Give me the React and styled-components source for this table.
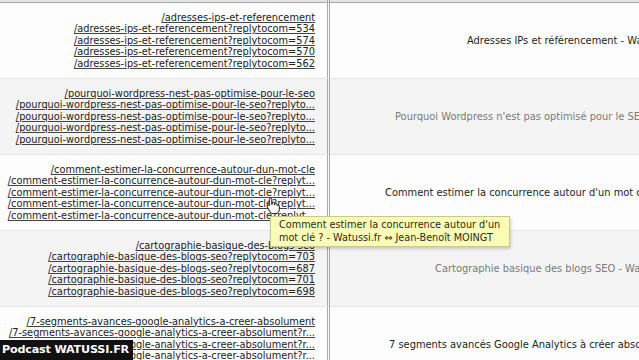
import styled, { createGlobalStyle } from "styled-components";

const GlobalStyle = createGlobalStyle`
  html, body {
    margin: 0;
    padding: 0;
    width: 639px;
    height: 360px;
    overflow: hidden;
    background: #fdfdfd;
  }
`;

const Page = styled.div`
  position: relative;
  width: 639px;
  height: 360px;
  overflow: hidden;
  font-family: "DejaVu Sans", Verdana, sans-serif;
`;

const Grid = styled.div`
  display: grid;
  grid-template-columns: 330px 1fr;
`;

const HeadCell = styled.div`
  height: 2px;
  background: #e4e4e4;
  border-bottom: 1px solid #a8a8a8;
  border-right: ${({ $divider }) => ($divider ? "3px double #a9a9a9" : "none")};
  box-sizing: content-box;
`;

const LinkCell = styled.div`
  height: 76px;
  box-sizing: border-box;
  border-right: 3px double #a9a9a9;
  border-bottom: 1px solid #e6e6e6;
  background: ${({ $shaded }) => ($shaded ? "#f4f4f4" : "#fdfdfd")};
  padding-right: 12px;
  display: flex;
  flex-direction: column;
  justify-content: center;
  align-items: flex-end;
  overflow: hidden;
`;

const Link = styled.a`
  flex-shrink: 0;
  display: block;
  white-space: nowrap;
  font-size: 9.8px;
  line-height: 11.5px;
  color: #222;
  text-decoration: underline;
  text-decoration-color: #444;
`;

const TitleCell = styled.div`
  height: 76px;
  box-sizing: border-box;
  border-bottom: 1px solid #e6e6e6;
  background: ${({ $shaded }) => ($shaded ? "#f4f4f4" : "#fdfdfd")};
  display: flex;
  align-items: center;
  padding-left: ${({ $offset }) => $offset}px;
  overflow: hidden;
`;

const Title = styled.span`
  white-space: nowrap;
  font-size: 9.9px;
  color: ${({ $muted }) => ($muted ? "#7a7a7a" : "#1e1e1e")};
`;

const Tooltip = styled.div`
  position: absolute;
  left: 270px;
  top: 216px;
  width: 240px;
  box-sizing: border-box;
  padding: 2px 7px 2px 8px;
  background: #fbfcb6;
  border: 1px solid #c9c98c;
  box-shadow: 1px 2px 3px rgba(0, 0, 0, 0.18);
  font-size: 9.7px;
  line-height: 12.5px;
  color: #2b2b1e;
  white-space: nowrap;
`;

const Cursor = styled.svg`
  position: absolute;
  left: 266px;
  top: 197px;
`;

const Badge = styled.div`
  position: absolute;
  left: 0;
  bottom: 0;
  height: 20px;
  padding: 0 4px 0 2px;
  background: #111;
  color: #fff;
  font-family: "DejaVu Sans", Verdana, sans-serif;
  font-weight: bold;
  font-size: 11.2px;
  line-height: 20px;
  letter-spacing: -0.2px;
`;

const rows = [
  {
    links: [
      "/adresses-ips-et-referencement",
      "/adresses-ips-et-referencement?replytocom=534",
      "/adresses-ips-et-referencement?replytocom=574",
      "/adresses-ips-et-referencement?replytocom=570",
      "/adresses-ips-et-referencement?replytocom=562",
    ],
    title: "Adresses IPs et référencement - Watussi.fr ⇔ Jean-Benoît MOINGT",
    offset: 137,
  },
  {
    links: [
      "/pourquoi-wordpress-nest-pas-optimise-pour-le-seo",
      "/pourquoi-wordpress-nest-pas-optimise-pour-le-seo?replyto...",
      "/pourquoi-wordpress-nest-pas-optimise-pour-le-seo?replyto...",
      "/pourquoi-wordpress-nest-pas-optimise-pour-le-seo?replyto...",
      "/pourquoi-wordpress-nest-pas-optimise-pour-le-seo?replyto...",
    ],
    title: "Pourquoi Wordpress n'est pas optimisé pour le SEO - Watussi.fr ⇔ Jean-Benoît MOINGT",
    offset: 65,
    shaded: true,
  },
  {
    links: [
      "/comment-estimer-la-concurrence-autour-dun-mot-cle",
      "/comment-estimer-la-concurrence-autour-dun-mot-cle?replyt...",
      "/comment-estimer-la-concurrence-autour-dun-mot-cle?replyt...",
      "/comment-estimer-la-concurrence-autour-dun-mot-cle?replyt...",
      "/comment-estimer-la-concurrence-autour-dun-mot-cle?replyt...",
    ],
    title: "Comment estimer la concurrence autour d'un mot clé ? - Watussi.fr ⇔ Jean-Benoît MOINGT",
    offset: 55,
  },
  {
    links: [
      "/cartographie-basique-des-blogs-seo",
      "/cartographie-basique-des-blogs-seo?replytocom=703",
      "/cartographie-basique-des-blogs-seo?replytocom=687",
      "/cartographie-basique-des-blogs-seo?replytocom=701",
      "/cartographie-basique-des-blogs-seo?replytocom=698",
    ],
    title: "Cartographie basique des blogs SEO - Watussi.fr ⇔ Jean-Benoît MOINGT",
    offset: 105,
    shaded: true,
  },
  {
    links: [
      "/7-segments-avances-google-analytics-a-creer-absolument",
      "/7-segments-avances-google-analytics-a-creer-absolument?r...",
      "/7-segments-avances-google-analytics-a-creer-absolument?r...",
      "/7-segments-avances-google-analytics-a-creer-absolument?r...",
      "/7-segments-avances-google-analytics-a-creer-absolument?r...",
    ],
    title: "7 segments avancés Google Analytics à créer absolument - Watussi.fr ⇔ Jean-Benoît MOINGT",
    offset: 59,
  },
];

const HandCursor = () => (
  <Cursor width="14" height="17" viewBox="0 0 14 17">
    <path
      d="M4.5 1.2c.8 0 1.3.6 1.3 1.3v5l.4-.1V6.2c0-.7.5-1.2 1.2-1.2s1.2.5 1.2 1.2v1.4l.3-.1c.1-.6.6-1 1.2-1 .7 0 1.1.5 1.1 1.2v.9c.2-.4.6-.6 1-.6.6 0 1.1.5 1.1 1.2v3.3c0 2.3-1.6 4.1-4 4.1H7.1c-1.4 0-2.3-.6-3-1.7L1.2 10c-.4-.6-.2-1.3.4-1.6.5-.3 1.1-.2 1.5.3l.2.3V2.5c0-.7.5-1.300 1.2-1.300z"
      fill="#fff"
      stroke="#111"
      strokeWidth="1"
      strokeLinejoin="round"
    />
  </Cursor>
);

const App = () => (
  <Page>
    <GlobalStyle />
    <Grid>
      <HeadCell $divider />
      <HeadCell />
      {rows.map((row, i) => [
        <LinkCell key={`l${i}`} $shaded={row.shaded}>
          {row.links.map((href, j) => (
            <Link key={j} href={href}>
              {href}
            </Link>
          ))}
        </LinkCell>,
        <TitleCell key={`t${i}`} $shaded={row.shaded} $offset={row.offset}>
          <Title $muted={row.shaded}>{row.title}</Title>
        </TitleCell>,
      ])}
    </Grid>
    <Tooltip>
      Comment estimer la concurrence autour d'un
      <br />
      mot clé ? - Watussi.fr ⇔ Jean-Benoît MOINGT
    </Tooltip>
    <HandCursor />
    <Badge>Podcast WATUSSI.FR</Badge>
  </Page>
);

export default App;
